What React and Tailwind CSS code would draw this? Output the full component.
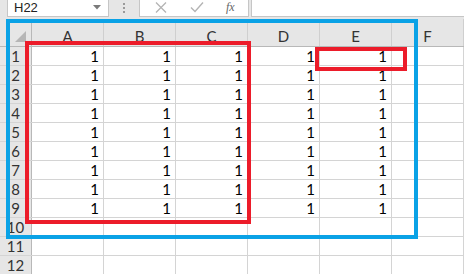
// ============================================================
// Spreadsheet snippet — name box, formula bar, grid of 1s
// with hand-drawn red / blue highlight boxes on top
// ============================================================

const COLUMNS = ['A', 'B', 'C', 'D', 'E', 'F', ''];
const ROWS = [1, 2, 3, 4, 5, 6, 7, 8, 9, 10, 11, 12];

// Cells A1:E9 all hold the value 1
function cellValue(row, colIndex) {
  return row <= 9 && colIndex <= 4 ? '1' : '';
}

function FormulaBar() {
  return (
    <div className="flex h-[19px] bg-[#e6e6e6]">
      {/* Name box (top is cut off) */}
      <div className="ml-[7px] w-[102px] h-[17px] bg-white border-l border-b border-r border-[#c6c6c6] flex items-end relative">
        <span className="pl-[6px] pb-[1px] text-[13px] leading-[15px] text-[#222] font-['Liberation_Sans',sans-serif]">H22</span>
        <svg className="absolute right-[7px] top-[5px]" width="8" height="5" viewBox="0 0 8 5">
          <path d="M0 0 L8 0 L4 4.5 Z" fill="#7a7a7a" />
        </svg>
      </div>

      {/* Grip dots */}
      <div className="w-[30px] flex flex-col items-center pt-[3px] gap-[2px]">
        <span className="w-[2px] h-[2px] bg-[#9a9a9a]" />
        <span className="w-[2px] h-[2px] bg-[#9a9a9a]" />
        <span className="w-[2px] h-[2px] bg-[#9a9a9a]" />
      </div>

      {/* Cancel / enter / fx */}
      <div className="w-[110px] h-[17px] bg-white border-l border-b border-r border-[#c6c6c6] flex items-center relative">
        <svg className="absolute left-[15px] top-[2px]" width="12" height="11" viewBox="0 0 12 11">
          <path d="M1 0.5 L11 10.5 M11 0.5 L1 10.5" stroke="#b4b4b4" strokeWidth="1.3" />
        </svg>
        <svg className="absolute left-[50px] top-[2px]" width="14" height="11" viewBox="0 0 14 11">
          <path d="M1 5.5 L5 9.5 L13 0.5" stroke="#b4b4b4" strokeWidth="1.4" fill="none" />
        </svg>
        <span className="absolute left-[86px] top-[0px] text-[12px] leading-[14px] italic text-[#666] font-['Liberation_Serif',serif]">fx</span>
      </div>

      {/* Formula input */}
      <div className="ml-[2px] flex-1 h-[17px] bg-white border-l border-b border-[#c6c6c6]" />
    </div>
  );
}

function Grid() {
  return (
    <div className="flex flex-col">
      {/* Column headers */}
      <div className="flex h-[28px] bg-[#e6e6e6] border-b border-[#b8b8b8]">
        <div className="w-[32px] shrink-0 border-r border-[#b8b8b8] relative">
          <svg className="absolute left-[15px] top-[12px]" width="12" height="12" viewBox="0 0 12 12">
            <path d="M0 11 L11 11 L11 0 Z" fill="#b6b6b6" />
          </svg>
        </div>
        {COLUMNS.map((col, i) => (
          <div
            key={i}
            className="w-[72px] shrink-0 border-r border-[#cfcfcf] flex items-end justify-center pb-[1px] text-[15px] leading-[18px] text-[#333]"
          >
            {col}
          </div>
        ))}
      </div>

      {/* Data rows */}
      {ROWS.map((row) => (
        <div key={row} className="flex h-[19px] border-b border-[#d4d4d4]">
          <div className="w-[32px] shrink-0 bg-[#e6e6e6] border-r border-[#b8b8b8] flex items-end justify-center text-[15px] leading-[18px] text-[#333]">
            {row}
          </div>
          {COLUMNS.map((col, i) => (
            <div
              key={i}
              className="w-[72px] shrink-0 border-r border-[#d4d4d4] flex items-end justify-end pr-[4px] text-[15px] leading-[18px] text-black"
            >
              {cellValue(row, i)}
            </div>
          ))}
        </div>
      ))}
    </div>
  );
}

export default function App() {
  return (
    <div className="relative w-[464px] h-[274px] overflow-hidden bg-white font-['Lato',sans-serif]">
      <FormulaBar />
      <Grid />

      {/* Annotation boxes drawn over the sheet */}
      <div className="absolute left-[6px] top-[19px] w-[412px] h-[220px] border-[4px] border-[#0aa2e6]" />
      <div className="absolute left-[25px] top-[41px] w-[226px] h-[183px] border-[4px] border-[#ec1c2a]" />
      <div className="absolute left-[315px] top-[47px] w-[92px] h-[24px] border-[4px] border-[#ec1c2a]" />
    </div>
  );
}
